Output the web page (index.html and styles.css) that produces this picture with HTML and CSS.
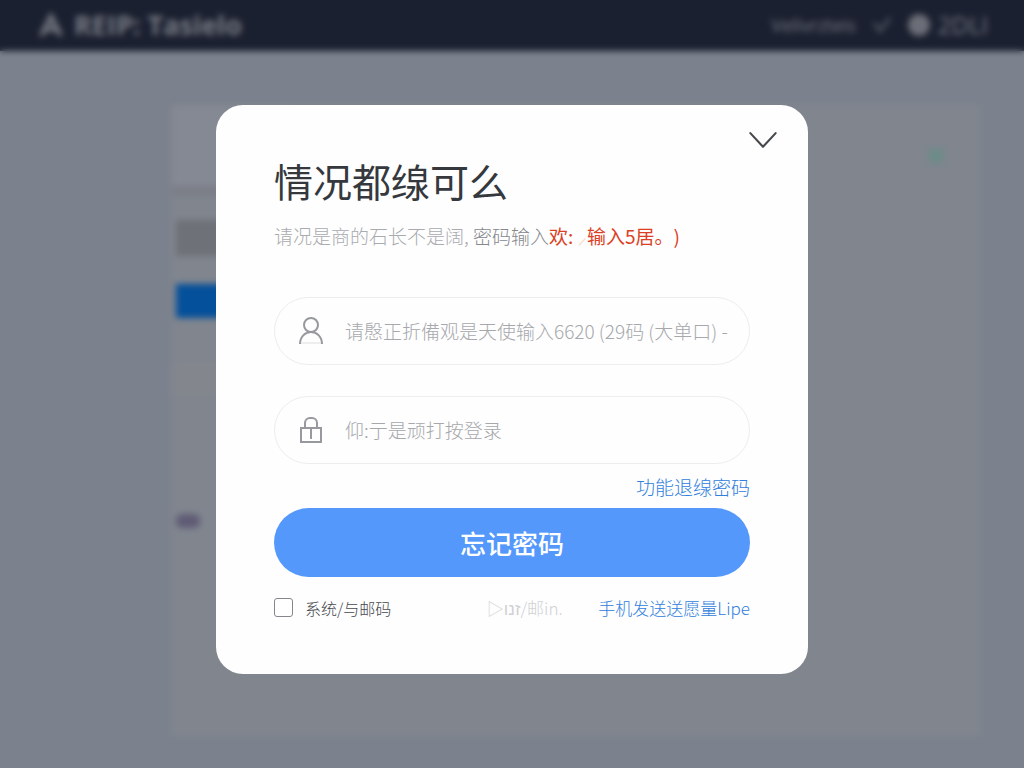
FILE: index.html
```
<!DOCTYPE html>
<html lang="zh-CN">
<head>
<meta charset="utf-8">
<meta name="viewport" content="width=device-width, initial-scale=1">
<title>忘记密码</title>
<link rel="stylesheet" href="styles.css">
</head>
<body>
<div class="page" aria-hidden="true">
  <header class="topbar">
    <div class="brand">
      <svg class="brand-mark" viewBox="0 0 24 24"><path d="M3 22 12 4l9 18M7 16h10" fill="none" stroke="currentColor" stroke-width="4"/></svg>
      <span>REIP: Tasielo</span>
    </div>
    <div class="topbar-tools">
      <span class="tool-text">Velivrzteis</span>
      <svg class="tool-caret" viewBox="0 0 20 20"><path d="M2 8l6 8L18 3" fill="none" stroke="currentColor" stroke-width="3"/></svg>
      <span class="avatar"></span>
      <span class="tool-user">2DLI</span>
    </div>
  </header>
  <main class="content">
    <div class="sidebar">
      <div class="block panel"></div>
      <div class="block line"></div>
      <div class="block grey"></div>
      <div class="block blue"></div>
      <div class="block pale"></div>
      <div class="block violet"></div>
    </div>
    <svg class="status" viewBox="0 0 24 24"><path d="M5 8h14l-2 12H7z" fill="currentColor"/></svg>
  </main>
</div>

<div class="backdrop">
  <section class="dialog" role="dialog" aria-modal="true" aria-labelledby="dialog-title">
    <div class="dialog-head">
      <button class="close" type="button" aria-label="收起">
        <svg viewBox="0 0 28 18"><path d="M2 2l12 13L26 2" fill="none" stroke="currentColor" stroke-width="2" stroke-linecap="round" stroke-linejoin="round"/></svg>
      </button>
    </div>
    <form class="form">
      <h1 class="title" id="dialog-title">情况都缐可么</h1>
      <p class="hint">请况是商的石长不是阔, <span class="hint-dark">密码输入</span><span class="hint-alert">欢: <span class="hint-faint">⸝</span>输入5居。)</span></p>
      <div class="field">
        <svg class="field-icon" viewBox="0 0 28 28"><circle cx="14" cy="8" r="7" fill="none" stroke="currentColor" stroke-width="2"/><path d="M3 27c0-7 5-12 11-12s11 5 11 12" fill="none" stroke="currentColor" stroke-width="2"/><path d="M4 26h20" stroke="currentColor" stroke-width="1" opacity=".3"/></svg>
        <input class="field-input" type="text" aria-label="账号" placeholder="请慇正折備观是天使输入6620 (29码 (大单口) -">
      </div>
      <div class="field">
        <svg class="field-icon" viewBox="0 0 28 28"><path d="M4 12h20v14H4zM14 12v11M8 12V7a5 5 0 0 1 5-5h2a5 5 0 0 1 5 5v5" fill="none" stroke="currentColor" stroke-width="2"/></svg>
        <input class="field-input" type="password" aria-label="密码" placeholder="仰:亍是顽打按登录">
      </div>
      <a class="link forgot" href="#">功能退缐密码</a>
      <button class="submit" type="submit">忘记密码</button>
      <div class="options">
        <label class="check"><input class="check-box" type="checkbox">系统/与邮码</label>
        <span class="muted">▷זנו/邮in.</span>
        <a class="link" href="#">手机发送送愿量Lipe</a>
      </div>
    </form>
  </section>
</div>
</body>
</html>
```
FILE: styles.css
```
* { box-sizing: border-box; }

body {
  margin: 0;
  background: #7c828d;
  font-family: "Noto Sans CJK SC", "Noto Sans", sans-serif;
}

.page {
  min-height: 100vh;
  display: flex;
  flex-direction: column;
}

.topbar {
  display: flex;
  justify-content: space-between;
  align-items: center;
  padding: 7px 36px 8px 38px;
  background: #1b2030;
  color: #777a83;
}

.brand {
  display: flex;
  align-items: center;
  gap: 10px;
  font: bold 27px/36px "Open Sans", sans-serif;
}

.brand-mark { width: 26px; height: 26px; }

.topbar-tools {
  display: flex;
  align-items: center;
  gap: 16px;
  font: 19px/36px "Open Sans", sans-serif;
  color: #737680;
}

.tool-text { font-size: 18px; }
.tool-caret { width: 20px; height: 20px; color: #50545f; }
.avatar { width: 22px; height: 22px; border-radius: 50%; background: #6c6e77; }
.tool-user { font-size: 24px; margin-left: -8px; }

.content {
  flex: 1;
  display: flex;
  justify-content: space-between;
  margin: 55px 44px 32px 172px;
  padding-right: 30px;
  background: #80858e;
}

.sidebar { width: 120px; }
.panel { height: 80px; background: #858993; }
.line { height: 10px; background: #7b7e87; }
.grey { height: 36px; margin: 24px 4px 0; background: #6e7177; }
.blue { height: 34px; margin: 28px 4px 0; background: #05509a; }
.pale { height: 34px; margin-top: 44px; background: #83868d; }
.violet { width: 24px; height: 14px; margin: 118px 4px 0; border-radius: 6px; background: #5f5b75; }

.status {
  width: 28px;
  height: 28px;
  margin-top: 34px;
  color: #6b8c88;
}

.backdrop {
  position: fixed;
  inset: 0;
  display: flex;
  align-items: center;
  justify-content: center;
  padding: 26px 16px 16px;
  overflow: auto;
  backdrop-filter: blur(3px);
}

.dialog {
  width: 592px;
  max-width: 100%;
  padding: 24px 30px 53px;
  border-radius: 27px;
  background: #fefefe;
}

.dialog-head { display: flex; justify-content: flex-end; }

.close {
  display: flex;
  padding: 2px 0;
  border: 0;
  background: none;
  color: #45484d;
}

.close svg { width: 30px; height: 19px; }

.form {
  display: flex;
  flex-direction: column;
  padding: 0 28px;
}

.title {
  margin: 0;
  color: #35383d;
  font-size: 39px;
  font-weight: 400;
  line-height: 56px;
}

.hint {
  margin: 14px 0 47px;
  color: #a9abaf;
  font-size: 19px;
  font-weight: 300;
  line-height: 28px;
  text-spacing-trim: space-all;
}

.hint-dark { color: #85888d; }
.hint-alert { color: #dc4024; font-weight: 400; }
.hint-faint { color: #f8d8c8; }

.field {
  display: flex;
  align-items: center;
  gap: 20px;
  margin-bottom: 31px;
  padding: 18px 20px 18px 22px;
  border: 1px solid #ededef;
  border-radius: 34px;
}

.field-icon {
  flex: none;
  width: 28px;
  height: 28px;
  color: #97999e;
}

.field-input {
  flex: 1;
  min-width: 0;
  height: 30px;
  padding: 0;
  border: 0;
  outline: 0;
  background: none;
  color: #55585d;
  font: 300 19px/30px "Noto Sans CJK SC", sans-serif;
}

.field-input::placeholder { color: #a6a8ac; opacity: 1; }

.link { color: #3080dc; text-decoration: none; }

.forgot {
  align-self: flex-end;
  margin-top: -22px;
  font-size: 19px;
  font-weight: 300;
  line-height: 28px;
}

.submit {
  margin-top: 7px;
  padding: 16px;
  border: 0;
  border-radius: 35px;
  background: #5598fc;
  color: #fff;
  font: 500 26px/37px "Noto Sans CJK SC", sans-serif;
}

.options {
  display: flex;
  align-items: center;
  justify-content: space-between;
  margin-top: 18px;
  font-size: 17px;
  font-weight: 300;
  line-height: 26px;
}

.check {
  display: flex;
  align-items: center;
  gap: 12px;
  color: #45484d;
  font-size: 16px;
}

.check-box {
  appearance: none;
  width: 19px;
  height: 19px;
  margin: 0;
  border: 1px solid #85878c;
  border-radius: 3px;
  background: #fff;
}

.check-box:checked { background: #5598fc; }

.muted { margin-left: 60px; color: #d0d1d3; }
```
